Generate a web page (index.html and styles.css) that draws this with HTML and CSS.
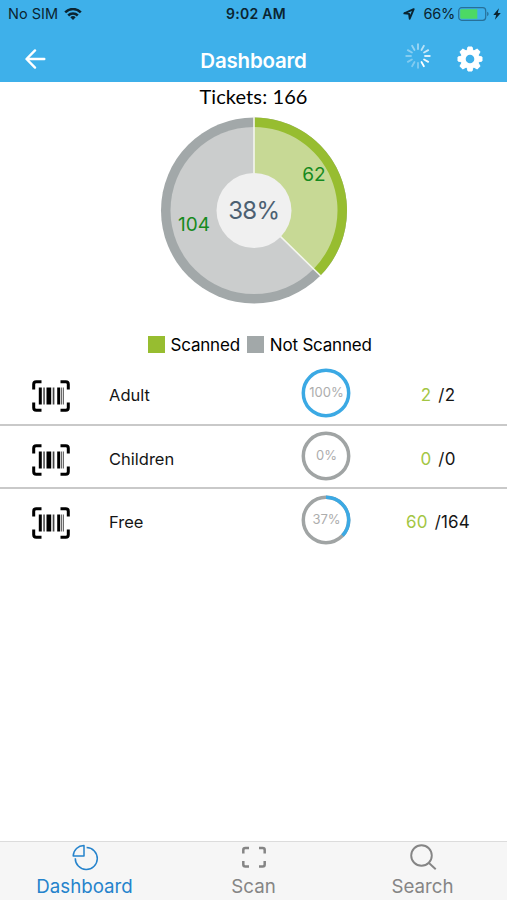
FILE: index.html
```html
<!DOCTYPE html>
<html lang="en">
<head>
    <meta charset="utf-8">
    <title>Dashboard</title>
    <link rel="stylesheet" href="styles.css">
</head>
<body>
<!-- shared icons -->
<svg class="defs" width="0" height="0">
    <symbol id="barcode" viewBox="0 0 38 32">
        <path d="M1.700 9.500V4.200q0-2.500 2.500-2.500H9.500M28.500 1.700h5.300q2.500 0 2.500 2.500V9.500M1.700 22.500v5.300q0 2.500 2.500 2.500H9.500M28.500 30.300h5.300q2.500 0 2.500-2.500V22.500" fill="none" stroke="#000" stroke-width="3"/>
        <path d="M6.800 7.500h3v17h-3zM14.500 7.500h4.700v17h-4.700zM25.200 7.500h3v17h-3z"/>
        <path d="M11.300 7.500h1.500v17h-1.500zM20.700 7.500h1.700v17h-1.700zM29.200 7.500h.9v17h-.9zM30.900 7.500h.9v17h-.9z" fill="#444"/>
    </symbol>
</svg>
<div class="app">
    <header class="header">
        <div class="status">
            <div class="status-left">
                <span>No SIM</span>
                <svg width="18" height="13" viewBox="0 0 18 13" fill="none" stroke="#0b2430" stroke-width="2.500">
                    <path d="M1.200 4.300a11 11 0 0 1 15.600 0M4.200 7.500a6.800 6.800 0 0 1 9.600 0"/>
                    <path d="M9 12 6.300 9.300a3.800 3.800 0 0 1 5.400 0z" fill="#0b2430" stroke="none"/>
                </svg>
            </div>
            <div class="status-time">9:02 AM</div>
            <div class="status-right">
                <svg width="12" height="12" viewBox="0 0 12 12">
                    <path d="M10.700 1.200 1.300 5.300l4.800.6.600 4.800z" fill="none" stroke="#0b2430" stroke-width="1.900" stroke-linejoin="round"/>
                </svg>
                <span class="battery-text">66%</span>
                <svg width="31" height="14" viewBox="0 0 31 14">
                    <rect x=".7" y=".7" width="27" height="12.600" rx="3" fill="none" stroke="#277099" stroke-width="1.200"/>
                    <path d="M3.500 2.200h15.800v9.600H3.500q-1.300 0-1.300-1.300v-7q0-1.300 1.300-1.300z" fill="#4cd964"/>
                    <path d="M29.100 4.800q1.500.6 1.500 2.200t-1.500 2.200z" fill="#277099"/>
                </svg>
                <svg class="bolt" width="8" height="12" viewBox="0 0 8 12"><path d="M5.900.3.300 7h2.900L1.900 11.700 7.800 4.900H4.800z" fill="#0b2430"/></svg>
            </div>
        </div>
        <div class="navbar">
            <svg class="back" width="22" height="20" viewBox="0 0 22 20" fill="none" stroke="#fff" stroke-width="2.400" stroke-linecap="round" stroke-linejoin="round">
                <path d="M10 1.400 1.500 10l8.500 8.600M2 10H19.300"/>
            </svg>
            <h1 class="title">Dashboard</h1>
            <div class="actions">
                <svg class="spinner" width="26" height="26" viewBox="-13 -13 26 26" stroke="#fff" stroke-width="1.800" stroke-linecap="round">
                    <path d="M0-7v-4.800" opacity=".5"/>
                    <path d="M0-7v-4.800" transform="rotate(30)" opacity=".62"/>
                    <path d="M0-7v-4.800" transform="rotate(60)" opacity=".72"/>
                    <path d="M0-7v-4.800" transform="rotate(90)" opacity=".82"/>
                    <path d="M0-7v-4.800" transform="rotate(120)" opacity=".92"/>
                    <path d="M0-7v-4.800" transform="rotate(150)"/>
                    <path d="M0-7v-4.800" transform="rotate(180)" opacity=".35"/>
                    <path d="M0-7v-4.800" transform="rotate(210)" opacity=".35"/>
                    <path d="M0-7v-4.800" transform="rotate(240)" opacity=".35"/>
                    <path d="M0-7v-4.800" transform="rotate(270)" opacity=".37"/>
                    <path d="M0-7v-4.800" transform="rotate(300)" opacity=".4"/>
                    <path d="M0-7v-4.800" transform="rotate(330)" opacity=".45"/>
                </svg>
                <svg class="gear" width="26" height="26" viewBox="-13 -13 26 26">
                    <g fill="#fff" stroke="#fff" stroke-linejoin="round">
                        <path id="teeth" d="M-2-12h4l1 4v16l-1 4h-4l-1-4v-16z"/>
                        <use href="#teeth" transform="rotate(45)"/>
                        <use href="#teeth" transform="rotate(90)"/>
                        <use href="#teeth" transform="rotate(135)"/>
                        <circle r="9"/>
                    </g>
                    <circle r="4.300" fill="#3eb0ea"/>
                </svg>
            </div>
        </div>
    </header>

    <main class="content">
        <div class="tickets">Tickets: 166</div>
        <svg class="chart" width="190" height="190" viewBox="-95 -95.500 190 190">
            <circle r="93" fill="#a2a8a9"/>
            <circle r="83.500" fill="#cbcdcd"/>
            <path d="M0 0V-93A93 93 0 0 1 66.400 65.100z" fill="#97bd30"/>
            <path d="M0 0V-83.500A83.500 83.500 0 0 1 59.600 58.500z" fill="#c7d995"/>
            <path d="M0-94V0L67.100 65.800" fill="none" stroke="#f4f6ef" stroke-width="1.600"/>
            <circle r="37.500" fill="#f0f0f0"/>
            <text class="chart-total" x="-.3" y="8.500">38%</text>
            <text class="chart-value" x="60" y="-30">62</text>
            <text class="chart-value" x="-60" y="20.500">104</text>
        </svg>
        <div class="legend">
            <i class="swatch scanned"></i><span class="legend-scanned">Scanned</span>
            <i class="swatch"></i><span>Not Scanned</span>
        </div>

        <div class="list">
            <div class="row">
                <svg class="barcode" width="38" height="32"><use href="#barcode"/></svg>
                <div class="name">Adult</div>
                <svg class="ring" width="50" height="50" viewBox="-25 -25 50 50">
                    <circle class="ring-bar" r="22.700"/>
                    <text x=".5" y="4.300">100%</text>
                </svg>
                <div class="count"><span class="done">2</span><span>/2</span></div>
            </div>
            <div class="row">
                <svg class="barcode" width="38" height="32"><use href="#barcode"/></svg>
                <div class="name">Children</div>
                <svg class="ring" width="50" height="50" viewBox="-25 -25 50 50">
                    <circle class="ring-track" r="22.700"/>
                    <text x=".5" y="4.300">0%</text>
                </svg>
                <div class="count"><span class="done">0</span><span>/0</span></div>
            </div>
            <div class="row">
                <svg class="barcode" width="38" height="32"><use href="#barcode"/></svg>
                <div class="name">Free</div>
                <svg class="ring" width="50" height="50" viewBox="-25 -25 50 50">
                    <circle class="ring-track" r="22.700"/>
                    <circle class="ring-bar" r="22.700" pathLength="100" stroke-dasharray="37 63" transform="rotate(-90)"/>
                    <text x=".5" y="4.300">37%</text>
                </svg>
                <div class="count"><span class="done">60</span><span>/164</span></div>
            </div>
        </div>
    </main>

    <nav class="tabs">
        <div class="tab active">
            <svg width="28" height="28" viewBox="0 0 28 28" fill="none" stroke="currentColor" stroke-width="1.500">
                <path d="M13 2.600V13H2.200C2.600 6.800 7 2.800 13 2.600z" stroke-linejoin="round"/>
                <path d="M15.600 4.500A11 11 0 1 1 4.300 15.200"/>
            </svg>
            <span>Dashboard</span>
        </div>
        <div class="tab">
            <svg width="28" height="28" viewBox="0 0 28 28" fill="none" stroke="currentColor" stroke-width="2.500">
                <path d="M3.300 10.500V7q0-2 2-2H9M19 5h3.700q2 0 2 2V10.500M3.300 18v3.500q0 2 2 2H9M19 23.500h3.700q2 0 2-2V18"/>
            </svg>
            <span>Scan</span>
        </div>
        <div class="tab">
            <svg width="28" height="28" viewBox="0 0 28 28" fill="none" stroke="currentColor" stroke-width="1.900">
                <circle cx="12.500" cy="12.500" r="10.300"/>
                <path d="M19.700 19.700l7 6.600"/>
            </svg>
            <span>Search</span>
        </div>
    </nav>
</div>
</body>
</html>
```
FILE: styles.css
```css
* {
    box-sizing: border-box;
}
body {
    margin: 0;
    background: #fff;
    color: #151515;
    font-family: Inter, "Liberation Sans", sans-serif;
}
svg {
    display: block;
    flex: none;
}
.defs {
    display: none;
}
.app {
    display: flex;
    flex-direction: column;
    height: 900px;
}

/* header */
.header {
    height: 82px;
    background: #3eb0ea;
}
.status {
    display: grid;
    grid-template-columns: 1fr auto 1fr;
    align-items: center;
    height: 28px;
    padding: 0 6px 0 8px;
    color: #0b2430;
    font-size: 14.500px;
    line-height: 28px;
}
.status-left {
    display: flex;
    align-items: center;
    gap: 6px;
}
.status-time {
    padding-left: 3px;
    font-weight: 600;
    font-size: 14px;
    letter-spacing: .3px;
}
.status-right {
    display: flex;
    align-items: center;
    justify-content: flex-end;
}
.battery-text {
    margin: 0 3px 0 8px;
    font-size: 14.500px;
    letter-spacing: -.2px;
}
.bolt {
    margin-left: 4px;
}
.navbar {
    display: grid;
    grid-template-columns: 1fr auto 1fr;
    align-items: center;
    height: 54px;
    padding: 0 24px 0 25px;
}
.title {
    margin: 11px 1px 0 0;
    color: #fff;
    font-size: 20.500px;
    font-weight: 600;
    letter-spacing: -.2px;
    line-height: 24px;
}
.back {
    margin-top: 7px;
}
.actions {
    display: flex;
    justify-content: flex-end;
    gap: 26px;
}
.spinner {
    margin-top: 4px;
}
.gear {
    margin-top: 7px;
}

/* chart */
.content {
    flex: 1;
}
.tickets {
    height: 33px;
    font-family: Lato, sans-serif;
    font-size: 20px;
    line-height: 28px;
    text-align: center;
    letter-spacing: .1px;
    color: #000;
}
.chart {
    margin: 0 auto;
}
.chart text {
    text-anchor: middle;
}
.chart-total {
    fill: #4c6072;
    font-size: 24px;
    letter-spacing: -.7px;
}
.chart-value {
    fill: #168a20;
    font-size: 19px;
}
.legend {
    display: flex;
    align-items: center;
    height: 20px;
    margin: 29px 0 0 147.500px;
    padding-top: 1px;
    font-size: 17px;
    letter-spacing: -.2px;
    color: #000;
}
.swatch {
    width: 17px;
    height: 17px;
    margin-right: 6px;
    background: #a2a8a9;
}
.swatch.scanned {
    background: #97bd30;
}
.legend-scanned {
    margin-right: 7px;
}

/* ticket types */
.list {
    margin-top: 8px;
}
.row {
    display: grid;
    grid-template-columns: 102px 148px 151px 74px;
    align-items: center;
    justify-items: center;
    height: 63.500px;
    font-size: 16.500px;
    line-height: 20px;
    border-bottom: 2px solid #c9c9c9;
}
.row:last-child {
    border-bottom-color: transparent;
}
.barcode {
    margin-top: 7px;
}
.name {
    justify-self: start;
    margin: 5px 0 0 7px;
}
.count {
    margin-top: 5px;
    font-size: 17px;
    letter-spacing: .2px;
}
.done {
    margin-right: 7px;
    color: #a3c644;
}
.ring circle {
    fill: none;
    stroke-width: 3.500;
}
.ring .ring-track {
    stroke: #a0a4a4;
}
.ring .ring-bar {
    stroke: #3ba9e4;
}
.ring text {
    fill: #adadad;
    font-size: 13px;
    text-anchor: middle;
}

/* bottom tabs */
.tabs {
    display: grid;
    grid-template-columns: repeat(3, 1fr);
    height: 59px;
    background: #f6f6f6;
    border-top: 1px solid #dcdcdc;
}
.tab {
    display: flex;
    flex-direction: column;
    align-items: center;
    padding-top: 1px;
    color: #858585;
    font-size: 18.700px;
    line-height: 32px;
}
.tab.active {
    color: #2583cc;
}
```
